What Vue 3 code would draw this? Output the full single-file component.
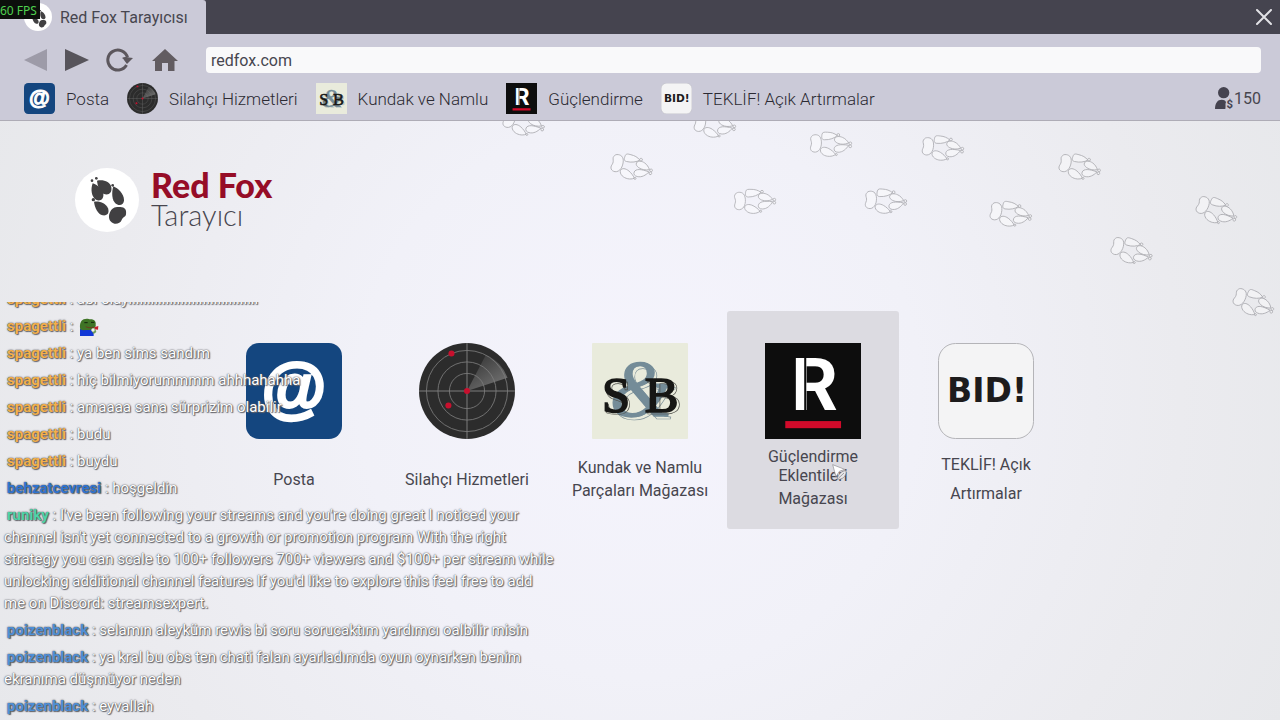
<script setup>
import { ref, h } from 'vue'

const address = ref('redfox.com')

const bookmarks = [
  { icon: 'mail', label: 'Posta' },
  { icon: 'radar', label: 'Silahçı Hizmetleri' },
  { icon: 'sb', label: 'Kundak ve Namlu' },
  { icon: 'boost', label: 'Güçlendirme' },
  { icon: 'bid', label: 'TEKLİF! Açık Artırmalar' },
]

const tiles = [
  { icon: 'mail', lines: ['Posta'], spacing: 'normal' },
  { icon: 'radar', lines: ['Silahçı Hizmetleri'], spacing: 'normal' },
  { icon: 'sb', lines: ['Kundak ve Namlu', 'Parçaları Mağazası'], spacing: 'normal' },
  { icon: 'boost', lines: ['Güçlendirme', 'Eklentileri', 'Mağazası'], spacing: 'tight', hovered: true },
  { icon: 'bid', lines: ['TEKLİF! Açık', 'Artırmalar'], spacing: 'loose' },
]

const orange = '#f3b04c'
const blue = '#4f8fd6'
const messages = [
  { name: 'spagettli', color: orange, text: 'abi olayııııııııııııııııııııııııııııııııııı' },
  { name: 'spagettli', color: orange, emote: true },
  { name: 'spagettli', color: orange, text: 'ya ben sims sandım' },
  { name: 'spagettli', color: orange, text: 'hiç bilmiyorummmm ahhhahahha' },
  { name: 'spagettli', color: orange, text: 'amaaaa sana sürprizim olabilir' },
  { name: 'spagettli', color: orange, text: 'budu' },
  { name: 'spagettli', color: orange, text: 'buydu' },
  { name: 'behzatcevresi', color: '#2f74d0', text: 'hoşgeldin' },
  { name: 'runiky', color: '#4fd3a8', text: "I've been following your streams and you're doing great I noticed your channel isn't yet connected to a growth or promotion program With the right strategy you can scale to 100+ followers 700+ viewers and $100+ per stream while unlocking additional channel features If you'd like to explore this feel free to add me on Discord: streamsexpert." },
  { name: 'poizenblack', color: blue, text: 'selamın aleyküm rewis bi soru sorucaktım yardımcı oalbilir misin' },
  { name: 'poizenblack', color: blue, text: 'ya kral bu obs ten chati falan ayarladımda oyun oynarken benim ekranıma düşmüyor neden' },
  { name: 'poizenblack', color: blue, text: 'eyvallah' },
]

const prints = [
  { x: 524, y: 2, r: 15 },
  { x: 715, y: 4, r: 8 },
  { x: 632, y: 46, r: 14 },
  { x: 755, y: 80, r: 0 },
  { x: 831, y: 23, r: 2 },
  { x: 943, y: 27, r: 6 },
  { x: 886, y: 80, r: 4 },
  { x: 1011, y: 93, r: 10 },
  { x: 1080, y: 46, r: 14 },
  { x: 1217, y: 90, r: 22 },
  { x: 1132, y: 130, r: 18 },
  { x: 1254, y: 182, r: 22 },
]

const svg = (viewBox, children) => h('svg', { viewBox, 'aria-hidden': 'true', width: '100%', height: '100%' }, children)
const letter = (t, x, y, size, family, fill, extra = {}) =>
  h('text', { x, y, 'font-size': size, 'font-family': family, 'font-weight': 700, fill, 'text-anchor': 'middle', ...extra }, t)

const serif = '"Liberation Serif", serif'

const AppIcon = (props) => {
  if (props.name === 'mail') {
    return svg('0 0 96 96', [
      h('rect', { width: 96, height: 96, rx: 13, fill: '#14467f' }),
      letter('@', 48, 67, 66, '"Liberation Sans", sans-serif', '#fff', { stroke: '#fff', 'stroke-width': 3 }),
    ])
  }
  if (props.name === 'radar') {
    return svg('0 0 284 284', [
      h('circle', { cx: 142, cy: 142, r: 142, fill: '#2c2c2c' }),
      h('defs', [
        h('linearGradient', { id: 'sweep', x1: 0, y1: 0, x2: 0.8, y2: 1 }, [
          h('stop', { offset: 0, 'stop-color': '#2e2e2e' }),
          h('stop', { offset: 1, 'stop-color': '#757575' }),
        ]),
      ]),
      h('path', { d: 'M142 142L198 35A121 121 0 0 1 262 103Z', fill: 'url(#sweep)' }),
      ...[52, 86, 120].map((r) => h('circle', { cx: 142, cy: 142, r, fill: 'none', stroke: '#7c7c7c', 'stroke-width': 2.5 })),
      h('path', { d: 'M142 0V284M0 142H284', stroke: '#7c7c7c', 'stroke-width': 3 }),
      ...[[96, 31], [142, 142], [87, 185]].map(([cx, cy]) => h('circle', { cx, cy, r: 9, fill: '#c8102e' })),
    ])
  }
  if (props.name === 'sb') {
    return svg('0 0 284 284', [
      h('rect', { width: 284, height: 284, rx: 3, fill: '#e9ebdc' }),
      letter('&', 154, 225, 240, serif, '#e9ebdc', { 'font-style': 'italic', 'font-weight': 400, stroke: '#7c8f97', 'stroke-width': 2 }),
      letter('&', 146, 217, 240, serif, '#748c98', { 'font-style': 'italic', 'font-weight': 400, stroke: '#748c98', 'stroke-width': 4 }),
      letter('S', 76, 209, 150, serif, 'none', { stroke: '#4d4d48', 'stroke-width': 2 }),
      letter('B', 213, 209, 150, serif, 'none', { stroke: '#4d4d48', 'stroke-width': 2 }),
      letter('S', 71, 203, 150, serif, '#171715', { 'font-weight': 400, stroke: '#171715', 'stroke-width': 5 }),
      letter('B', 206, 203, 150, serif, '#171715', { 'font-weight': 400, stroke: '#171715', 'stroke-width': 5 }),
    ])
  }
  if (props.name === 'boost') {
    return svg('0 0 284 284', [
      h('rect', { width: 284, height: 284, fill: '#0d0d0d' }),
      letter('R', 147, 197, 216, '"Liberation Sans Narrow", Roboto, sans-serif', '#fff'),
      h('path', { d: 'M119 40V200', stroke: '#0d0d0d', 'stroke-width': 6 }),
      h('rect', { x: 60, y: 231, width: 165, height: 21, fill: '#d20a2a' }),
    ])
  }
  return svg('0 0 96 96', [
    h('rect', { x: 0.5, y: 0.5, width: 95, height: 95, rx: 17, fill: '#f4f4f5', stroke: '#b4b4b8', 'stroke-width': 1 }),
    letter('BID!', 49, 59, 33, '"DejaVu Sans", sans-serif', '#1d1b1c'),
  ])
}
AppIcon.props = ['name']

const PawLogo = () =>
  svg('44 39 192 192', [
    h('circle', { cx: 140, cy: 135, r: 96, fill: '#fff' }),
    h('g', { fill: '#414042' }, [
      h('path', { d: 'M148 174c6-17 18-19 32-18c14 0 19 9 17 22c-1 9-10 8-13 17c-4 10-16 14-25 10c-12-5-16-18-11-31z' }),
      h('path', { d: 'M159 94c14 6 32 22 32 42c0 14-15 19-26 9c-10-10-12-31-6-51z' }),
      h('path', { d: 'M110 77c18-4 40 2 43 20c3 17-9 26-24 19c-11-6-17-22-19-39z' }),
      h('path', { d: 'M97 85c16 6 30 17 32 32c2 15-10 24-22 17c-13-8-17-30-10-49z' }),
      h('path', { d: 'M101 140c16-3 36 4 42 20c5 14-2 23-16 21c-14-3-24-23-26-41z' }),
      h('circle', { cx: 108, cy: 70, r: 4 }),
      h('circle', { cx: 95, cy: 77, r: 4 }),
      h('circle', { cx: 157, cy: 91, r: 4 }),
      h('circle', { cx: 99, cy: 134, r: 5 }),
    ]),
  ])
</script>

<template>
  <div class="browser">
    <header>
      <div class="tabbar">
        <div class="tab">
          <span class="tab-logo"><PawLogo /></span>
          <span>Red Fox Tarayıcısı</span>
        </div>
        <button class="close" aria-label="Kapat">
          <svg viewBox="0 0 16 16" width="16" height="16"><path d="M1 1L15 15M15 1L1 15" stroke="#e2e2e6" stroke-width="2" stroke-linecap="round" /></svg>
        </button>
      </div>
      <div class="toolbar">
        <nav class="controls">
          <button aria-label="Geri"><svg viewBox="0 0 24 24" width="24" height="24"><path d="M0 12L23 1V23Z" fill="#9d9ba8" /></svg></button>
          <button aria-label="İleri"><svg viewBox="0 0 24 24" width="24" height="24"><path d="M0 1V23L24 12Z" fill="#57545b" /></svg></button>
          <button aria-label="Yenile">
            <svg viewBox="0 0 28 24" width="28" height="24"><path d="M20.500 17A10 10 0 1 1 21.500 9.500" fill="none" stroke="#5c575d" stroke-width="3" /><path d="M16 10C19 8 23 10 27 10C25 12 23 14 21 16C19 14 18 11 16 10Z" fill="#5c575d" /></svg>
          </button>
          <button aria-label="Ana sayfa">
            <svg viewBox="0 0 28 24" width="28" height="24"><path d="M14 1L27 13H23.500V23H17V15H11V23H4V13H1Z" fill="#625c61" /></svg>
          </button>
        </nav>
        <input v-model="address" class="address" type="text" aria-label="Adres" />
      </div>
      <div class="bookmarks">
        <a v-for="b in bookmarks" :key="b.label" href="#" class="bookmark">
          <span class="bookmark-icon"><AppIcon :name="b.icon" /></span>
          <span>{{ b.label }}</span>
        </a>
        <div class="visitors">
          <svg viewBox="0 0 57 75" width="19" height="25" aria-hidden="true">
            <circle cx="26" cy="20" r="17" fill="#45434f" />
            <path d="M0 69C0 51 8 41 20 41C28 41 33 45 33 49C30 55 33 58 31 69Z" fill="#45434f" />
            <text x="44" y="66" font-size="34" font-weight="700" font-family="Roboto, sans-serif" text-anchor="middle" fill="#45434f">$</text>
          </svg>
          <span>150</span>
        </div>
      </div>
    </header>

    <main>
      <svg class="prints" width="1280" height="240" viewBox="0 0 1280 240" aria-hidden="true">
        <defs>
          <g id="print" fill="#fff" fill-opacity="0.4" stroke="#aeaeb3" stroke-width="2.500">
            <path d="M8 12C16 8 30 8 34 24C38 42 32 60 18 62C6 63 0 54 4 44C7 36 5 32 3 26C1 20 4 16 8 12Z" />
            <path d="M36 8C37 0 44 1 52 1C64 1 72 3 82 10C74 18 60 24 44 24C34 24 35 16 36 8Z" />
            <path d="M74 21C76 12 88 11 98 15C106 18 112 24 117 31C106 36 94 37 84 33C78 30 73 27 74 21Z" />
            <path d="M74 49C76 38 92 35 117 38C110 50 100 60 86 60C78 60 73 56 74 49Z" />
            <path d="M33 54C35 46 46 44 58 50C66 54 74 60 79 67C68 75 52 75 42 69C36 65 32 60 33 54Z" />
            <circle cx="85" cy="8" r="4" />
            <circle cx="122" cy="32" r="4" />
            <circle cx="122" cy="41" r="4" />
            <circle cx="81" cy="67" r="3" />
          </g>
        </defs>
        <use v-for="(p, i) in prints" :key="i" href="#print" :transform="`translate(${p.x} ${p.y}) rotate(${p.r}) scale(0.333) translate(-64 -36)`" />
      </svg>

      <div class="brand">
        <span class="brand-logo"><PawLogo /></span>
        <h1><strong>Red Fox</strong><span>Tarayıcı</span></h1>
      </div>

      <nav class="tiles">
        <a v-for="t in tiles" :key="t.icon" href="#" class="tile" :class="{ hovered: t.hovered }">
          <span class="tile-icon"><AppIcon :name="t.icon" /></span>
          <span class="tile-label" :class="t.spacing"><span v-for="l in t.lines" :key="l">{{ l }}</span></span>
          <svg v-if="t.hovered" class="cursor" viewBox="0 0 48 54" width="16" height="18" aria-hidden="true">
            <path d="M2 2L38 16L22 22L12 38Z" fill="#fff" stroke="#8b8b90" stroke-width="2" />
            <path d="M16 44C18 30 30 20 42 20C44 32 36 44 22 46Z" fill="#e8e8ea" stroke="#77777c" stroke-width="2" />
            <path d="M20 42L36 27" stroke="#77777c" stroke-width="2" />
          </svg>
        </a>
      </nav>
    </main>

    <section class="chat" aria-label="Sohbet">
      <p v-for="(m, i) in messages" :key="i">
        <b :style="{ color: m.color }">{{ m.name }}</b><span class="colon"> : </span>
        <svg v-if="m.emote" class="emote" viewBox="0 0 60 54" width="20" height="18" aria-hidden="true">
          <path d="M3 54V32H44V54Z" fill="#1238d6" />
          <path d="M4 34C1 22 4 8 14 4C22 0 30 3 34 4C44 3 52 10 50 20C52 28 42 36 28 36C18 36 10 38 4 34Z" fill="#3f7426" />
          <path d="M16 14H26M36 13H46" stroke="#14240c" stroke-width="3" />
          <path d="M20 26C28 30 38 30 44 27" fill="none" stroke="#6d3a20" stroke-width="3" />
          <path d="M36 36L48 30L52 42L44 48Z" fill="#6f9c58" />
          <path d="M46 28L58 24L57 35L48 34Z" fill="#c81e2c" />
          <circle cx="42" cy="36" r="5" fill="#f4f0ea" />
        </svg>
        <template v-else>{{ m.text }}</template>
      </p>
    </section>

    <div class="fps">60 FPS</div>
  </div>
</template>

<style>
body {
  margin: 0;
}
</style>

<style scoped>
.browser {
  position: relative;
  display: flex;
  flex-direction: column;
  min-height: 100vh;
  overflow: hidden;
  font-family: Roboto, "Noto Sans", sans-serif;
  font-size: 16px;
  color: #47464f;
}
button {
  display: flex;
  padding: 0;
  border: 0;
  background: none;
}
a {
  color: inherit;
  text-decoration: none;
}
header {
  background: #cbcad8;
  border-bottom: 1px solid #aeacb6;
}
.tabbar {
  display: flex;
  align-items: center;
  justify-content: space-between;
  height: 34px;
  padding-right: 8px;
  background: #45444f;
}
.tab {
  display: flex;
  align-items: center;
  box-sizing: border-box;
  height: 34px;
  padding: 0 18px 0 24px;
  gap: 8px;
  background: #cbcad8;
  border-top-right-radius: 3px;
}
.tab-logo {
  width: 28px;
  height: 28px;
}
.toolbar {
  display: flex;
  align-items: center;
  padding: 13px 19px 0 24px;
}
.controls {
  display: flex;
  align-items: center;
  gap: 17px;
  width: 182px;
  height: 26px;
}
.address {
  flex: 1;
  min-width: 0;
  height: 26px;
  box-sizing: border-box;
  padding: 0 5px;
  border: 0;
  border-radius: 4px;
  background: #f9f9fa;
  color: #47464f;
  font: inherit;
}
.bookmarks {
  display: flex;
  align-items: center;
  gap: 18px;
  height: 31px;
  padding: 10px 19px 6px 24px;
}
.bookmark {
  display: flex;
  align-items: center;
  gap: 11px;
  font-size: 17px;
  font-weight: 300;
  line-height: 18px;
  color: #2b2a33;
  white-space: nowrap;
}
.bookmark-icon {
  width: 31px;
  height: 31px;
}
.visitors {
  display: flex;
  align-items: center;
  margin-left: auto;
  line-height: 18px;
}
main {
  position: relative;
  flex: 1;
  padding: 47px 75px;
  background: radial-gradient(circle at 50% 46%, #f5f4fd 0, #f1f1f8 280px, #ebebef 540px, #e7e8eb 720px);
}
.prints {
  position: absolute;
  top: 0;
  left: 0;
}
.brand {
  display: flex;
  align-items: center;
  gap: 12px;
}
.brand-logo {
  width: 64px;
  height: 64px;
}
h1 {
  display: flex;
  flex-direction: column;
  margin: 0;
  font-family: Lato, sans-serif;
  font-size: 34px;
  line-height: 30px;
}
h1 strong {
  color: #960d27;
}
h1 span {
  font-size: 29px;
  font-weight: 300;
}
.tiles {
  display: flex;
  justify-content: center;
  gap: 1px;
  margin: 79px -75px 0;
}
.tile {
  position: relative;
  display: flex;
  flex-direction: column;
  align-items: center;
  box-sizing: border-box;
  width: 172px;
  height: 218px;
  padding-top: 32px;
  border-radius: 3px;
  white-space: nowrap;
}
.tile.hovered {
  background: #dcdbe1;
}
.tile-icon {
  width: 96px;
  height: 96px;
}
.tile-label {
  display: flex;
  flex-direction: column;
  align-items: center;
  justify-content: center;
  height: 80px;
  line-height: 23px;
}
.tile-label.tight {
  line-height: 19px;
}
.tile-label.tight span:last-child {
  line-height: 27px;
}
.tile-label.loose {
  line-height: 29px;
}
.cursor {
  position: absolute;
  left: 105px;
  top: 153px;
}
.chat {
  position: absolute;
  left: 0;
  top: 302px;
  bottom: 0;
  display: flex;
  flex-direction: column;
  justify-content: flex-end;
  gap: 5px;
  width: 556px;
  box-sizing: border-box;
  padding: 0 0 3px 4px;
  overflow: hidden;
  font-size: 15px;
  font-weight: 400;
  line-height: 22px;
  color: #fff;
  text-shadow: 0 0 1px #505055, 1px 1px 1px #66666c, 0 0 2px #66666c;
}
.chat p {
  flex: none;
  margin: 0;
}
.chat b {
  margin-left: 3px;
  font-weight: 700;
}
.colon {
  white-space: pre;
}
.emote {
  margin-left: 2px;
  vertical-align: -5px;
}
.fps {
  position: absolute;
  left: 0;
  top: 0;
  width: 40px;
  height: 19px;
  overflow: hidden;
  background: #0c0f0c;
  color: #4fd04f;
  font-family: "Noto Sans", sans-serif;
  font-size: 12px;
  line-height: 21px;
  white-space: nowrap;
}
</style>
